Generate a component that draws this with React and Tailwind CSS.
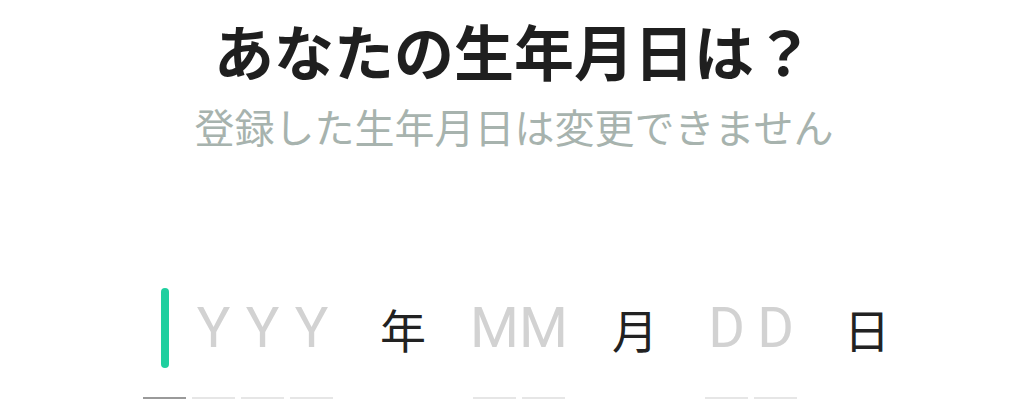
import React from 'react';

const jp = '"Noto Sans CJK JP", "Noto Sans", sans-serif';

const Cell = ({ char, active }) => (
  <div className="flex flex-col items-center w-[43px]">
    <div className="h-[80px] w-full flex items-center justify-center">
      {active ? (
        <span className="block w-[8px] h-[80px] rounded-full bg-[#1fcf9f]" />
      ) : (
        <span className="text-[56px] leading-none text-[#d2d2d2]" style={{ fontFamily: 'Roboto, "Noto Sans", sans-serif' }}>
          {char}
        </span>
      )}
    </div>
    <div className={`mt-[29px] h-[2px] w-full ${active ? 'bg-[#9a9a9a]' : 'bg-[#e6e6e6]'}`} />
  </div>
);

const Group = ({ chars, activeIndex }) => (
  <div className="flex gap-[6px]">
    {chars.map((c, i) => (
      <Cell key={i} char={c} active={i === activeIndex} />
    ))}
  </div>
);

const Label = ({ children }) => (
  <div className="w-[80px] h-[80px] flex items-center justify-center text-[46px] leading-none text-[#222222]">
    {children}
  </div>
);

export default function App() {
  return (
    <div className="w-[1020px] h-[420px] bg-white overflow-hidden" style={{ fontFamily: jp }}>
      {/* Heading */}
      <div className="flex flex-col items-center pt-[20px] pl-[8px]">
        <h1 className="text-[60px] leading-[60px] font-bold text-[#1f1f1f]">あなたの生年月日は？</h1>
        <p className="mt-[26px] text-[40px] leading-[40px] text-[#a7b3ae]">登録した生年月日は変更できません</p>
      </div>

      {/* Date input */}
      <div className="flex items-start gap-[30px] pl-[143px] mt-[142px]">
        <Group chars={['Y', 'Y', 'Y', 'Y']} activeIndex={0} />
        <Label>年</Label>
        <Group chars={['M', 'M']} />
        <Label>月</Label>
        <Group chars={['D', 'D']} />
        <Label>日</Label>
      </div>
    </div>
  );
}
